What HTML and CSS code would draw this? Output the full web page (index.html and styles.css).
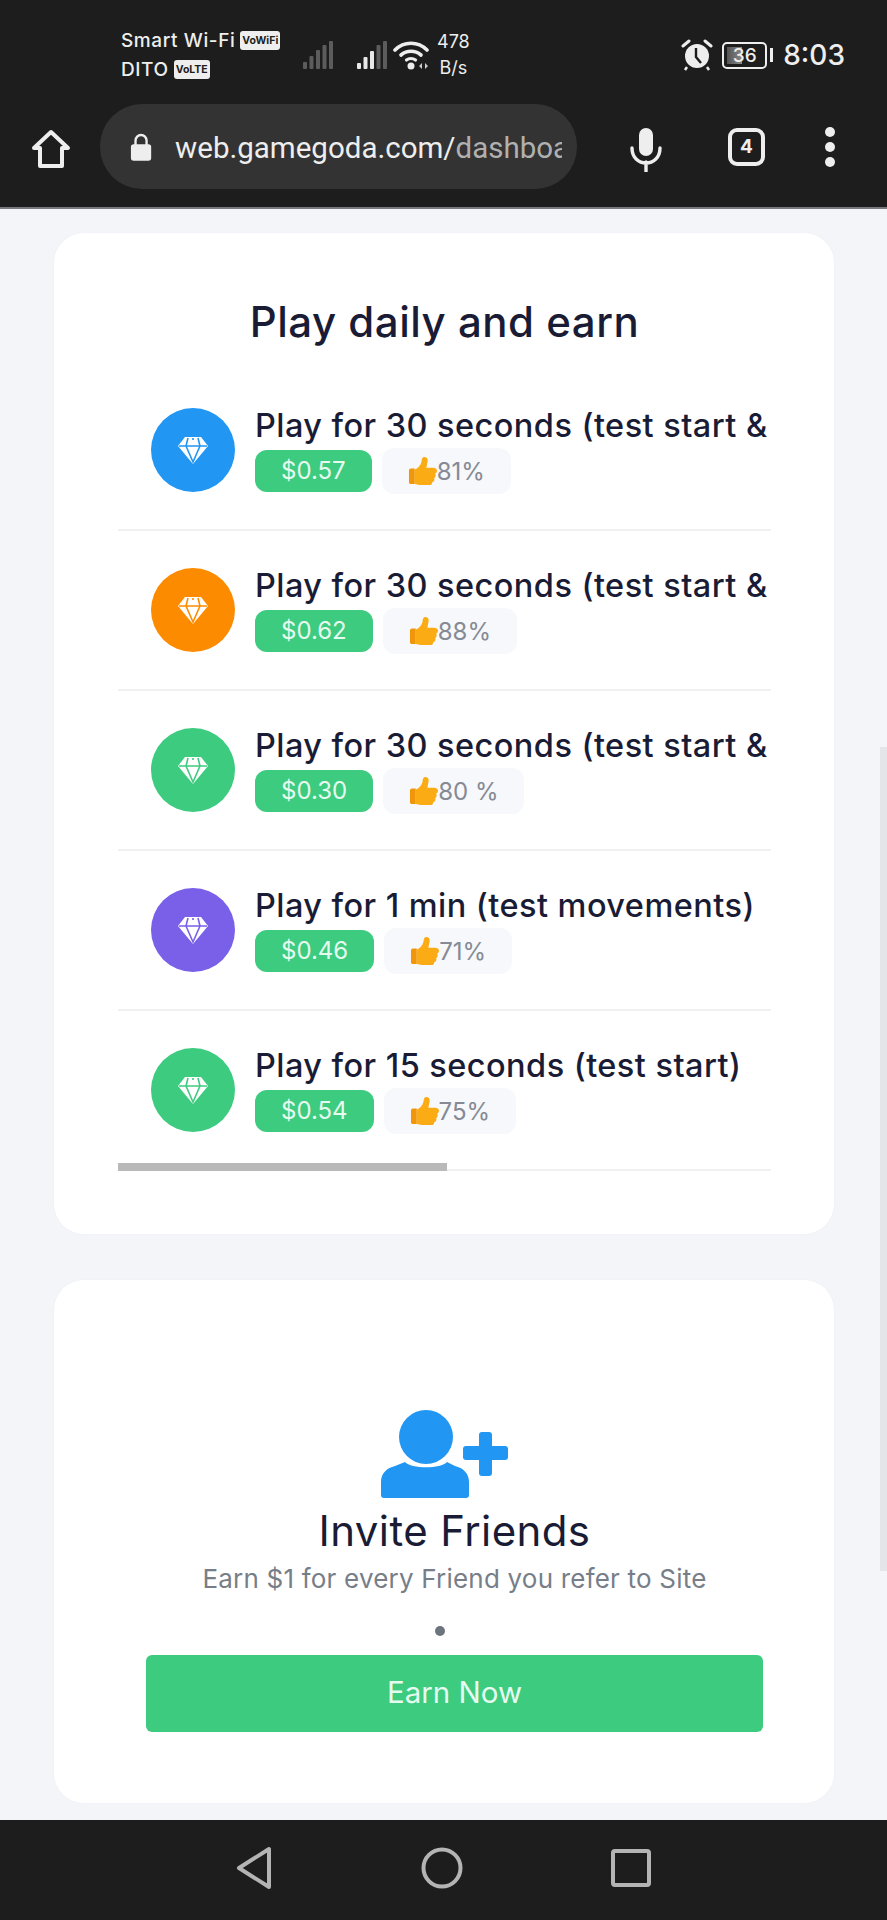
FILE: index.html
```html
<!DOCTYPE html>
<html>
   <head>
      <title>Dashboard</title>
      <meta charset="utf-8">
      <link rel="stylesheet" href="styles.css">
   </head>
   <body>
      <svg class="defs" width="0" height="0">
         <symbol id="gem" viewBox="0 0 30 28">
            <path d="M7 1h16l7 9-15 18L0 10z" fill="#fff"/>
            <path d="M1 10h28M10 2 8 10l7 16 7-16-2-8M15 2v2" fill="none" stroke="currentColor" stroke-width="1.6"/>
         </symbol>
         <symbol id="thumb" viewBox="0 0 30 30">
            <path d="M1 14c0-1 1-2 2-2h4v16H3c-1 0-2-1-2-2z" fill="#f0960a"/>
            <path d="M7 13c3-1 6-4 7-8 0-3 1-5 3-5 3 0 4 3 3 6l-1 5h7c2 0 4 1 4 3s-1 3-2 3c1 1 1 4-1 5 1 1 0 4-2 4 0 2-1 3-3 3H12c-2 0-3-1-5-1z" fill="#fbab13"/>
         </symbol>
      </svg>
      <div class="phone">
         <header class="topbar">
            <div class="status">
               <div class="carriers">
                  <div class="carrier">Smart Wi-Fi <span class="tag">VoWiFi</span></div>
                  <div class="carrier">DITO <span class="tag">VoLTE</span></div>
               </div>
               <svg class="signal" width="30" height="28" viewBox="0 0 30 28">
                  <g fill="#5c5c5c"><rect x="0" y="21" width="4" height="7" rx="1"/><rect x="6.500" y="15" width="4" height="13" rx="1"/><rect x="13" y="9" width="4" height="19" rx="1"/><rect x="19.500" y="4" width="4" height="24" rx="1"/><rect x="26" y="0" width="4" height="28" rx="1"/></g>
               </svg>
               <svg class="signal second" width="30" height="28" viewBox="0 0 30 28">
                  <g fill="#e8e8e8"><rect x="0" y="22" width="4" height="6" rx="1"/><rect x="6.500" y="16" width="4" height="12" rx="1"/><rect x="13" y="10" width="4" height="18" rx="1"/></g>
                  <g fill="#5c5c5c"><rect x="19.500" y="4" width="4" height="24" rx="1"/><rect x="26" y="0" width="4" height="28" rx="1"/></g>
               </svg>
               <svg class="wifi" width="36" height="30" viewBox="0 0 36 30">
                  <g fill="none" stroke="#eee" stroke-width="3.600" stroke-linecap="round"><path d="M2 10C11 1 25 1 34 10"/><path d="M8 15c6-5 14-5 20 0"/></g>
                  <path d="M13.500 20c2.500-2 6.500-2 9 0" fill="none" stroke="#eee" stroke-width="3.200" stroke-linecap="round"/>
                  <circle cx="18" cy="26" r="3.500" fill="#eee"/>
                  <path d="M26 26l3-3v6zM35 26l-3-3v6z" fill="#ccc"/>
               </svg>
               <div class="speed"><span>478</span><span>B/s</span></div>
               <div class="status-right">
                  <svg width="32" height="32" viewBox="0 0 32 32">
                     <circle cx="16" cy="17" r="12" fill="#eee"/>
                     <path d="M15 9v9l5 6" fill="none" stroke="#1d1d1d" stroke-width="2.400"/>
                     <path d="M2 7l6-5M30 7l-6-5" stroke="#eee" stroke-width="3" stroke-linecap="round"/>
                     <path d="M6 28l-2 3M26 28l2 3" stroke="#eee" stroke-width="2.500"/>
                  </svg>
                  <div class="battery"><div class="battery-fill"></div><span>36</span></div>
                  <div class="battery-tip"></div>
                  <div class="clock">8:03</div>
               </div>
            </div>
            <div class="toolbar">
               <svg class="home" width="40" height="40" viewBox="0 0 40 40">
                  <path d="M3 19 20 3l17 16h-6v18H9V19z" fill="none" stroke="#eee" stroke-width="4" stroke-linejoin="round"/>
               </svg>
               <div class="urlbar">
                  <svg width="24" height="30" viewBox="0 0 24 30">
                     <path d="M6 13V8a6 6 0 0 1 12 0v5" fill="none" stroke="#eee" stroke-width="2.600"/>
                     <rect x="1" y="12" width="22" height="18" rx="3" fill="#eee"/>
                  </svg>
                  <div class="url">web.gamegoda.com/<span class="url-dim">dashboard</span></div>
               </div>
               <svg class="mic" width="32" height="44" viewBox="0 0 32 44">
                  <rect x="9" y="0" width="14" height="28" rx="7" fill="#eee"/>
                  <path d="M2 20c0 20 28 20 28 0M16 34v10" fill="none" stroke="#eee" stroke-width="3.400" stroke-linecap="round"/>
               </svg>
               <div class="tabs">4</div>
               <div class="menu"><i></i><i></i><i></i></div>
            </div>
         </header>

         <main class="content">
            <section class="card daily">
               <h2 class="daily-title">Play daily and earn</h2>
               <div class="offers">
                  <div class="offer">
                     <div class="offer-icon blue"><svg width="30" height="28"><use href="#gem"/></svg></div>
                     <div class="offer-body">
                        <div class="offer-name">Play for 30 seconds (test start &amp;</div>
                        <div class="offer-meta"><span class="price">$0.57</span><span class="rating"><svg width="29" height="29"><use href="#thumb"/></svg>81%</span></div>
                     </div>
                  </div>
                  <div class="offer">
                     <div class="offer-icon orange"><svg width="30" height="28"><use href="#gem"/></svg></div>
                     <div class="offer-body">
                        <div class="offer-name">Play for 30 seconds (test start &amp;</div>
                        <div class="offer-meta"><span class="price">$0.62</span><span class="rating"><svg width="29" height="29"><use href="#thumb"/></svg>88%</span></div>
                     </div>
                  </div>
                  <div class="offer">
                     <div class="offer-icon green"><svg width="30" height="28"><use href="#gem"/></svg></div>
                     <div class="offer-body">
                        <div class="offer-name">Play for 30 seconds (test start &amp;</div>
                        <div class="offer-meta"><span class="price">$0.30</span><span class="rating"><svg width="29" height="29"><use href="#thumb"/></svg>80 %</span></div>
                     </div>
                  </div>
                  <div class="offer">
                     <div class="offer-icon purple"><svg width="30" height="28"><use href="#gem"/></svg></div>
                     <div class="offer-body">
                        <div class="offer-name">Play for 1 min (test movements)</div>
                        <div class="offer-meta"><span class="price">$0.46</span><span class="rating"><svg width="29" height="29"><use href="#thumb"/></svg>71%</span></div>
                     </div>
                  </div>
                  <div class="offer">
                     <div class="offer-icon green"><svg width="30" height="28"><use href="#gem"/></svg></div>
                     <div class="offer-body">
                        <div class="offer-name">Play for 15 seconds (test start)</div>
                        <div class="offer-meta"><span class="price">$0.54</span><span class="rating"><svg width="29" height="29"><use href="#thumb"/></svg>75%</span></div>
                     </div>
                  </div>
                  <div class="hscroll"></div>
               </div>
            </section>

            <section class="card invite">
               <svg class="invite-icon" width="127" height="88" viewBox="0 0 127 88">
                  <ellipse cx="45" cy="27" rx="27" ry="27" fill="#2196f3"/>
                  <path d="M0 85V72c0-9 6-14 14-16l10-4c6 7 36 7 42 0l8 4c8 2 14 7 14 16v13c0 2-1 3-3 3H3c-2 0-3-1-3-3z" fill="#2196f3"/>
                  <rect x="82" y="36" width="45" height="14" rx="3" fill="#2196f3"/>
                  <rect x="98" y="22" width="13" height="44" rx="3" fill="#2196f3"/>
               </svg>
               <h2 class="invite-title">Invite Friends</h2>
               <p class="invite-text">Earn $1 for every Friend you refer to Site</p>
               <div class="dot-row"><i></i></div>
               <button class="earn">Earn Now</button>
            </section>
            <div class="page-scroll"></div>
         </main>

         <nav class="navbar">
            <svg width="40" height="44" viewBox="0 0 40 44"><path d="M35 3v38L5 22z" fill="none" stroke="#b4b4b4" stroke-width="4" stroke-linejoin="round"/></svg>
            <svg width="44" height="44" viewBox="0 0 44 44"><circle cx="22" cy="22" r="18.500" fill="none" stroke="#b4b4b4" stroke-width="4"/></svg>
            <svg width="42" height="42" viewBox="0 0 42 42"><rect x="3" y="4" width="36" height="34" rx="2" fill="none" stroke="#b4b4b4" stroke-width="4"/></svg>
         </nav>
      </div>
   </body>
</html>
```

FILE: styles.css
```css
* {
   box-sizing: border-box;
}
body {
   margin: 0;
   font-family: Inter, "Open Sans", sans-serif;
   color: #1a1c35;
}
.defs {
   display: block;
   height: 0;
}
.phone {
   display: flex;
   flex-direction: column;
   width: 887px;
   height: 1920px;
   overflow: hidden;
}

/* top bars */
.topbar {
   height: 209px;
   flex: none;
   background: #1d1d1d;
   border-bottom: 2px solid #77797c;
   color: #eee;
}
.status {
   display: flex;
   align-items: center;
   height: 100px;
   padding: 10px 42px 0 121px;
}
.carrier {
   display: flex;
   align-items: center;
   gap: 5px;
   height: 29px;
   font-size: 19px;
   font-weight: 500;
   letter-spacing: .6px;
   white-space: nowrap;
}
.carriers {
   width: 182px;
}
.tag {
   background: #eee;
   color: #1d1d1d;
   border-radius: 3px;
   padding: 2px 2px;
   font-size: 10.500px;
   line-height: 15px;
   font-weight: 700;
   letter-spacing: 0;
}
.signal {
   flex: none;
}
.signal.second {
   margin-left: 24px;
}
.wifi {
   flex: none;
   margin-left: 6px;
}
.speed {
   display: flex;
   flex-direction: column;
   align-items: center;
   margin-left: 8px;
   font-size: 18px;
   line-height: 26px;
}
.status-right {
   display: flex;
   align-items: center;
   margin-left: auto;
}
.battery {
   position: relative;
   width: 45px;
   height: 27px;
   margin-left: 9px;
   border: 2.500px solid #eee;
   border-radius: 5px;
   padding: 3px;
   text-align: center;
   font-size: 19px;
   line-height: 17px;
   font-weight: 500;
}
.battery span {
   position: relative;
}
.battery-fill {
   position: absolute;
   left: 3px;
   top: 3px;
   bottom: 3px;
   width: 15px;
   background: linear-gradient(to right, #555, #888);
}
.battery-tip {
   width: 3px;
   height: 14px;
   margin-left: 3px;
   background: #eee;
}
.clock {
   margin-left: 10px;
   font-size: 28px;
   font-weight: 500;
}
.toolbar {
   display: flex;
   align-items: center;
   height: 107px;
   padding: 0 0 14px 31px;
}
.home {
   flex: none;
   margin-top: 4px;
}
.urlbar {
   display: flex;
   align-items: center;
   gap: 23px;
   width: 477px;
   height: 85px;
   margin-left: 29px;
   padding: 0 15px 0 30px;
   border-radius: 42px;
   background: #333;
   overflow: hidden;
}
.url {
   overflow: hidden;
   padding-top: 3px;
   white-space: nowrap;
   font-family: Roboto, sans-serif;
   font-size: 29.500px;
}
.url-dim {
   color: #b0b0b0;
}
.mic {
   flex: none;
   margin-left: 53px;
   margin-top: 6px;
}
.tabs {
   width: 37px;
   height: 38px;
   margin-left: 66px;
   border: 4px solid #eee;
   border-radius: 9px;
   text-align: center;
   font-size: 19px;
   line-height: 30px;
   font-weight: 700;
}
.menu {
   display: flex;
   flex-direction: column;
   gap: 5px;
   margin-left: 60px;
}
.menu i {
   width: 10px;
   height: 10px;
   border-radius: 50%;
   background: #eee;
}

/* page */
.content {
   position: relative;
   flex: 1;
   background: #f3f5f9;
   padding: 24px 53px 0 54px;
   overflow: hidden;
}
.card {
   background: #fff;
   border-radius: 30px;
   box-shadow: 0 0 3px rgba(40, 50, 80, .03);
}
.daily {
   height: 1001px;
   padding: 61px 63px 0 64px;
}
.daily-title {
   margin: 0;
   text-align: center;
   font-size: 42px;
   line-height: 56px;
   font-weight: 500;
   letter-spacing: .5px;
}
.offers {
   position: relative;
   margin-top: 21px;
}
.offer {
   display: flex;
   height: 160px;
   padding: 37px 0 0 33px;
   border-bottom: 2px solid #eef0f2;
   overflow: hidden;
}
.offer-icon {
   display: flex;
   align-items: center;
   justify-content: center;
   flex: none;
   width: 84px;
   height: 84px;
   border-radius: 50%;
}
.blue {
   background: #2196f3;
   color: #2196f3;
}
.orange {
   background: #fd8b00;
   color: #fd8b00;
}
.green {
   background: #3ccb7f;
   color: #3ccb7f;
}
.purple {
   background: #7a60e8;
   color: #7a60e8;
}
.offer-body {
   margin-left: 20px;
   min-width: 0;
}
.offer-name {
   font-size: 32.500px;
   line-height: 36px;
   font-weight: 500;
   letter-spacing: .45px;
   white-space: nowrap;
}
.offer-meta {
   display: flex;
   align-items: center;
   gap: 10px;
   height: 48px;
   margin-top: 3px;
}
.price {
   height: 42px;
   padding: 0 26px;
   border-radius: 12px;
   background: #3ccb7f;
   color: #e6fbef;
   font-size: 24px;
   line-height: 42px;
}
.rating {
   display: flex;
   align-items: center;
   height: 46px;
   padding: 0 26px;
   border-radius: 12px;
   background: #f7f8fb;
   color: #858a94;
   font-size: 24px;
}
.hscroll {
   position: absolute;
   left: 0;
   bottom: 0;
   width: 329px;
   height: 8px;
   background: #b9b9b9;
}
.invite {
   display: flex;
   flex-direction: column;
   align-items: center;
   height: 523px;
   margin-top: 46px;
   padding: 130px 71px 0 92px;
}
.invite-icon {
   flex: none;
   margin-left: -21px;
}
.invite-title {
   margin: 7px 0 0;
   font-size: 42px;
   line-height: 52px;
   font-weight: 400;
   letter-spacing: .4px;
}
.invite-text {
   margin: 5px 0 0;
   color: #777e88;
   font-size: 26px;
   line-height: 34px;
   letter-spacing: .2px;
   white-space: nowrap;
}
.dot-row {
   display: flex;
   justify-content: center;
   width: 100%;
   margin-top: 30px;
   padding-right: 30px;
}
.dot-row i {
   width: 10px;
   height: 10px;
   border-radius: 50%;
   background: #6c757d;
}
.earn {
   flex: none;
   width: 617px;
   height: 77px;
   margin-top: 19px;
   margin-left: 0;
   padding-bottom: 5px;
   border: 0;
   border-radius: 6px;
   background: #3ccb7f;
   color: #e6fbef;
   font-family: inherit;
   font-size: 29.500px;
}
.page-scroll {
   position: absolute;
   top: 538px;
   right: 0;
   width: 7px;
   height: 824px;
   background: #e4e5e8;
}

.navbar {
   display: flex;
   align-items: center;
   justify-content: space-between;
   flex: none;
   height: 100px;
   padding: 0 235px 4px 234px;
   background: #1d1d1d;
}
```
